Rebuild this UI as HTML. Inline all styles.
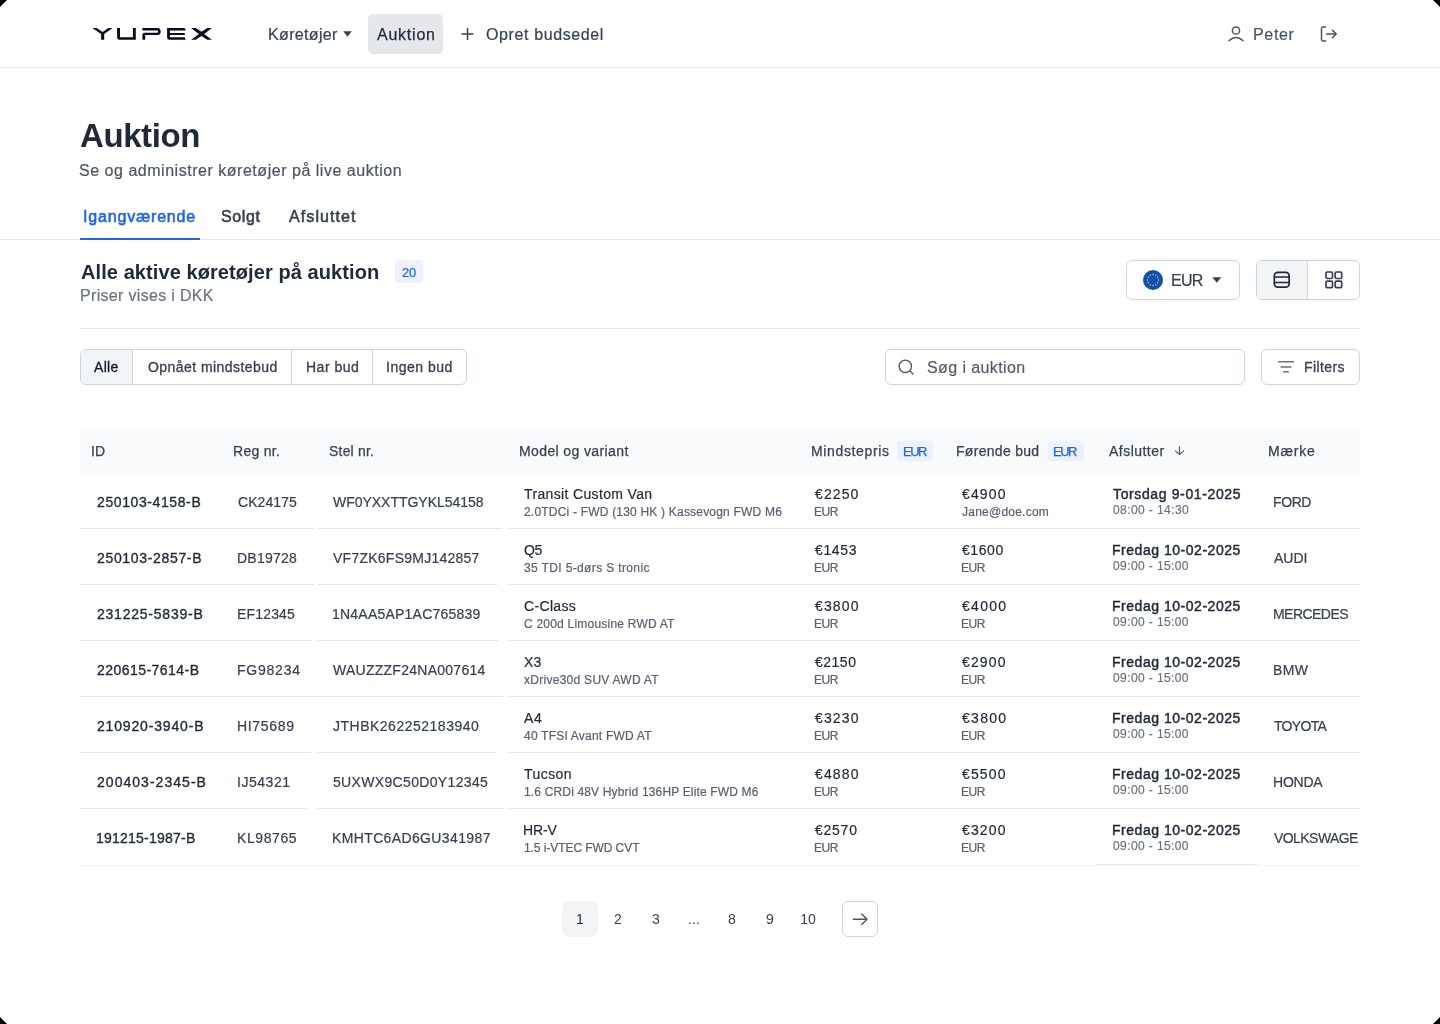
<!DOCTYPE html>
<html><head><meta charset="utf-8"><style>
html,body{margin:0;padding:0;}
body{width:1440px;height:1024px;position:relative;overflow:hidden;background:#fff;font-family:"Liberation Sans",sans-serif;}
.t{position:absolute;white-space:nowrap;line-height:1;will-change:transform;}
svg{position:absolute;overflow:visible;}
</style></head><body>
<div style="position:absolute;left:0px;top:67px;width:1440px;height:1px;background:#E5E7EB"></div>
<svg style="left:0;top:0" width="240" height="60" viewBox="0 0 240 60">
<g fill="#0A0D22">
<path d="M92.2 28 L96.8 28 L102.6 31.9 L108.3 28 L112.6 28 L104.2 33.9 L104.2 39.8 L101.1 39.8 L101.1 33.9 Z"/>
<path d="M117.1 28 L120 28 L120 37.3 L132.9 37.3 L132.9 28 L135.8 28 L135.8 39.8 L119.3 39.8 Q117.1 39.8 117.1 37.6 Z"/>
<path d="M142.4 28 L157.5 28 Q160.7 28 160.7 31.5 Q160.7 35.1 157.5 35.1 L145.2 35.1 L145.2 39.8 L142.4 39.8 L142.4 34.9 Q142.4 32.7 144.6 32.7 L157.2 32.7 Q158.1 32.7 158.1 31.5 Q158.1 30.4 157.2 30.4 L142.4 30.4 Z"/>
<path d="M167.1 28 L184.6 28 L185.8 30.4 L169.9 30.4 L169.9 32.9 L184.4 32.9 L185.2 35.1 L169.9 35.1 L169.9 37.3 L184.6 37.3 L185.8 39.8 L169.3 39.8 Q167.1 39.8 167.1 37.6 Z"/>
<path d="M191.1 28 L195.8 28 L201.5 31.8 L207.2 28 L211.8 28 L204.2 33.9 L211.8 39.8 L207.2 39.8 L201.5 35.9 L195.8 39.8 L191.1 39.8 L198.8 33.9 Z"/>
</g></svg>
<div class="t" style="left:267.75px;top:27.46px;font-size:16px;font-weight:400;color:#374151;letter-spacing:0.344px;-webkit-text-stroke:0.2px #374151">Køretøjer</div>
<svg style="left:343px;top:31px" width="9" height="6" viewBox="0 0 9 6"><path d="M0.3 0.3 L8.7 0.3 L4.5 5.7 Z" fill="#374151"/></svg>
<div style="position:absolute;left:368px;top:14px;width:75px;height:40px;background:#E5E7EB;border-radius:5px"></div>
<div class="t" style="left:376.70px;top:27.46px;font-size:16px;font-weight:400;color:#1F2937;letter-spacing:0.767px;-webkit-text-stroke:0.25px #1F2937">Auktion</div>
<svg style="left:461px;top:28px" width="13" height="12" viewBox="0 0 13 12"><path d="M6.5 0 V12 M0.5 6 H12.5" stroke="#374151" stroke-width="1.5" fill="none"/></svg>
<div class="t" style="left:485.80px;top:27.46px;font-size:16px;font-weight:400;color:#374151;letter-spacing:0.615px;-webkit-text-stroke:0.2px #374151">Opret budsedel</div>
<svg style="left:1228px;top:26px" width="16" height="16" viewBox="0 0 16 16"><circle cx="8" cy="4.5" r="3.6" stroke="#475569" stroke-width="1.5" fill="none"/><path d="M1 14.6 Q8 8.5 15 14.6" stroke="#475569" stroke-width="1.5" fill="none" stroke-linecap="round"/></svg>
<div class="t" style="left:1252.90px;top:27.46px;font-size:16px;font-weight:400;color:#475569;letter-spacing:0.675px;-webkit-text-stroke:0.2px #475569">Peter</div>
<svg style="left:1320px;top:26px" width="18" height="16" viewBox="0 0 18 16"><path d="M5.5 1 H3.2 Q1.5 1 1.5 2.7 V13.3 Q1.5 15 3.2 15 H5.5" stroke="#475569" stroke-width="1.5" fill="none" stroke-linecap="round"/><path d="M6.5 8 H16 M12.5 4.3 L16.2 8 L12.5 11.7" stroke="#475569" stroke-width="1.5" fill="none" stroke-linecap="round" stroke-linejoin="round"/></svg>
<div class="t" style="left:79.90px;top:119.07px;font-size:33px;font-weight:700;color:#1F2937;letter-spacing:-0.417px;-webkit-text-stroke:0px">Auktion</div>
<div class="t" style="left:79.25px;top:162.76px;font-size:16px;font-weight:400;color:#4B5563;letter-spacing:0.524px;-webkit-text-stroke:0.2px #4B5563">Se og administrer køretøjer på live auktion</div>
<div style="position:absolute;left:0px;top:239px;width:1440px;height:1px;background:#E5E7EB"></div>
<div style="position:absolute;left:80px;top:238px;width:120px;height:2px;background:#1C64F2"></div>
<div class="t" style="left:83.30px;top:209.46px;font-size:16px;font-weight:400;color:#1C64F2;letter-spacing:0.818px;-webkit-text-stroke:0.55px #1C64F2">Igangværende</div>
<div class="t" style="left:221.40px;top:209.46px;font-size:16px;font-weight:400;color:#374151;letter-spacing:0.65px;-webkit-text-stroke:0.55px #374151">Solgt</div>
<div class="t" style="left:288.50px;top:209.46px;font-size:16px;font-weight:400;color:#374151;letter-spacing:1.088px;-webkit-text-stroke:0.55px #374151">Afsluttet</div>
<div class="t" style="left:80.50px;top:262.37px;font-size:20px;font-weight:700;color:#1F2937;letter-spacing:0.081px;-webkit-text-stroke:0px">Alle aktive køretøjer på auktion</div>
<div style="position:absolute;left:395px;top:260px;width:28px;height:23px;background:#EDF2FE;border-radius:4px"></div>
<div class="t" style="left:401.80px;top:265.80px;font-size:13px;font-weight:400;color:#1C64F2;letter-spacing:-0.2px;-webkit-text-stroke:0.2px #1C64F2">20</div>
<div class="t" style="left:79.50px;top:288.26px;font-size:16px;font-weight:400;color:#6B7280;letter-spacing:0.324px;-webkit-text-stroke:0.2px #6B7280">Priser vises i DKK</div>
<div style="position:absolute;left:1126px;top:260px;width:112px;height:38px;border:1px solid #D1D5DB;border-radius:6px;background:#fff"></div>
<svg style="left:1143px;top:270px" width="20" height="20" viewBox="0 0 20 20"><circle cx="10" cy="10" r="10" fill="#0F4FB4"/>
<g fill="#F6D32D"><circle cx="15.50" cy="10.00" r="0.7"/><circle cx="14.76" cy="12.75" r="0.7"/><circle cx="12.75" cy="14.76" r="0.7"/><circle cx="10.00" cy="15.50" r="0.7"/><circle cx="7.25" cy="14.76" r="0.7"/><circle cx="5.24" cy="12.75" r="0.7"/><circle cx="4.50" cy="10.00" r="0.7"/><circle cx="5.24" cy="7.25" r="0.7"/><circle cx="7.25" cy="5.24" r="0.7"/><circle cx="10.00" cy="4.50" r="0.7"/><circle cx="12.75" cy="5.24" r="0.7"/><circle cx="14.76" cy="7.25" r="0.7"/></g></svg>
<div class="t" style="left:1170.60px;top:272.96px;font-size:16px;font-weight:400;color:#374151;letter-spacing:-0.7px;-webkit-text-stroke:0.2px #374151">EUR</div>
<svg style="left:1212px;top:277px" width="10" height="6" viewBox="0 0 10 6"><path d="M0.3 0.2 L9.3 0.2 L4.8 5.8 Z" fill="#374151"/></svg>
<div style="position:absolute;left:1256px;top:260px;width:102px;height:38px;border:1px solid #CBD5E1;border-radius:6px;background:#fff;overflow:hidden"></div>
<div style="position:absolute;left:1257px;top:261px;width:50px;height:38px;background:#F3F4F6;border-radius:5px 0 0 5px"></div>
<div style="position:absolute;left:1307px;top:261px;width:1px;height:38px;background:#CBD5E1"></div>
<svg style="left:1273.25px;top:271.2px" width="18" height="18" viewBox="0 0 18 18"><rect x="1.35" y="1.35" width="14.8" height="14.8" rx="3.4" stroke="#1F2937" stroke-width="1.7" fill="none"/><path d="M1.35 6.1 H16.15 M1.35 11.4 H16.15" stroke="#1F2937" stroke-width="1.5"/></svg>
<svg style="left:1325px;top:271px" width="18" height="18" viewBox="0 0 18 18"><g stroke="#374151" stroke-width="1.7" fill="none"><rect x="1" y="1" width="6.5" height="6.5" rx="1.3"/><rect x="10.2" y="1" width="6.5" height="6.5" rx="1.3"/><rect x="1" y="10.2" width="6.5" height="6.5" rx="1.3"/><rect x="10.2" y="10.2" width="6.5" height="6.5" rx="1.3"/></g></svg>
<div style="position:absolute;left:80px;top:328px;width:1280px;height:1px;background:#E5E7EB"></div>
<div style="position:absolute;left:80px;top:349px;width:385px;height:34px;border:1px solid #CBD5E1;border-radius:6px;background:#fff"></div>
<div style="position:absolute;left:81px;top:350px;width:51px;height:34px;background:#F3F4F6;border-radius:5px 0 0 5px"></div>
<div style="position:absolute;left:132px;top:350px;width:1px;height:34px;background:#CBD5E1"></div>
<div style="position:absolute;left:291px;top:350px;width:1px;height:34px;background:#CBD5E1"></div>
<div style="position:absolute;left:372px;top:350px;width:1px;height:34px;background:#CBD5E1"></div>
<div class="t" style="left:94.30px;top:360.15px;font-size:14px;font-weight:400;color:#111827;letter-spacing:0.333px;-webkit-text-stroke:0.3px #111827">Alle</div>
<div class="t" style="left:147.70px;top:360.15px;font-size:14px;font-weight:400;color:#374151;letter-spacing:0.438px;-webkit-text-stroke:0.3px #374151">Opnået mindstebud</div>
<div class="t" style="left:305.50px;top:360.15px;font-size:14px;font-weight:400;color:#374151;letter-spacing:0.5px;-webkit-text-stroke:0.3px #374151">Har bud</div>
<div class="t" style="left:386.10px;top:360.15px;font-size:14px;font-weight:400;color:#374151;letter-spacing:0.5px;-webkit-text-stroke:0.3px #374151">Ingen bud</div>
<div style="position:absolute;left:885px;top:349px;width:358px;height:34px;border:1px solid #CBD5E1;border-radius:6px;background:#fff"></div>
<svg style="left:898px;top:359px" width="16" height="16" viewBox="0 0 16 16"><circle cx="7.3" cy="7.3" r="6.2" stroke="#4B5563" stroke-width="1.3" fill="none"/><path d="M11.8 11.8 L15 15" stroke="#4B5563" stroke-width="1.3" stroke-linecap="round"/></svg>
<div class="t" style="left:926.70px;top:359.96px;font-size:16px;font-weight:400;color:#505A69;letter-spacing:0.4px;-webkit-text-stroke:0.15px #505A69">Søg i auktion</div>
<div style="position:absolute;left:1261px;top:349px;width:97px;height:34px;border:1px solid #D1D5DB;border-radius:6px;background:#fff"></div>
<svg style="left:1277px;top:360px" width="18" height="14" viewBox="0 0 18 14"><path d="M1 1.8 H17 M3.6 6.9 H14.5 M6.2 11.8 H11.9" stroke="#6B7280" stroke-width="1.5"/></svg>
<div class="t" style="left:1303.80px;top:360.15px;font-size:14px;font-weight:400;color:#374151;letter-spacing:0.417px;-webkit-text-stroke:0.3px #374151">Filters</div>
<div style="position:absolute;left:80px;top:429px;width:1280px;height:44px;background:#F9FAFB"></div>
<div class="t" style="left:91.25px;top:444.45px;font-size:14px;font-weight:400;color:#374151;letter-spacing:0.0px;-webkit-text-stroke:0.25px #374151">ID</div>
<div class="t" style="left:233.30px;top:444.45px;font-size:14px;font-weight:400;color:#374151;letter-spacing:0.3px;-webkit-text-stroke:0.25px #374151">Reg nr.</div>
<div class="t" style="left:329.10px;top:444.45px;font-size:14px;font-weight:400;color:#374151;letter-spacing:0.2px;-webkit-text-stroke:0.25px #374151">Stel nr.</div>
<div class="t" style="left:519.40px;top:444.45px;font-size:14px;font-weight:400;color:#374151;letter-spacing:0.387px;-webkit-text-stroke:0.25px #374151">Model og variant</div>
<div class="t" style="left:810.50px;top:444.45px;font-size:14px;font-weight:400;color:#374151;letter-spacing:0.64px;-webkit-text-stroke:0.25px #374151">Mindstepris</div>
<div style="position:absolute;left:897px;top:441px;width:36px;height:20px;background:#EBF1FD;border-radius:4px"></div>
<div class="t" style="left:902.50px;top:445.00px;font-size:13px;font-weight:400;color:#1C64F2;letter-spacing:-1.5px;-webkit-text-stroke:0.25px #1C64F2">EUR</div>
<div class="t" style="left:956.30px;top:444.45px;font-size:14px;font-weight:400;color:#374151;letter-spacing:0.3px;-webkit-text-stroke:0.25px #374151">Førende bud</div>
<div style="position:absolute;left:1048px;top:441px;width:36px;height:20px;background:#EBF1FD;border-radius:4px"></div>
<div class="t" style="left:1053.30px;top:445.00px;font-size:13px;font-weight:400;color:#1C64F2;letter-spacing:-1.5px;-webkit-text-stroke:0.25px #1C64F2">EUR</div>
<div class="t" style="left:1108.50px;top:444.45px;font-size:14px;font-weight:400;color:#374151;letter-spacing:0.475px;-webkit-text-stroke:0.25px #374151">Afslutter</div>
<svg style="left:1174px;top:445px" width="12" height="12" viewBox="0 0 12 12"><path d="M5.5 1.9 V9.6 M1.5 5.9 L5.5 9.7 L9.6 5.9" stroke="#4B5563" stroke-width="1.1" fill="none" stroke-linecap="round" stroke-linejoin="round"/></svg>
<div class="t" style="left:1268.40px;top:444.45px;font-size:14px;font-weight:400;color:#374151;letter-spacing:0.825px;-webkit-text-stroke:0.25px #374151">Mærke</div>
<div class="t" style="left:96.80px;top:494.85px;font-size:14px;font-weight:400;color:#1F2937;letter-spacing:0.6px;-webkit-text-stroke:0.35px #1F2937">250103-4158-B</div>
<div class="t" style="left:238.10px;top:494.85px;font-size:14px;font-weight:400;color:#374151;letter-spacing:0.083px;-webkit-text-stroke:0.2px #374151">CK24175</div>
<div class="t" style="left:333.40px;top:494.85px;font-size:14px;font-weight:400;color:#374151;letter-spacing:-0.025px;-webkit-text-stroke:0.2px #374151">WF0YXXTTGYKL54158</div>
<div class="t" style="left:524.30px;top:487.05px;font-size:14px;font-weight:400;color:#1F2937;letter-spacing:0.353px;-webkit-text-stroke:0.2px #1F2937">Transit Custom Van</div>
<div class="t" style="left:524.30px;top:505.74px;font-size:12px;font-weight:400;color:#576172;letter-spacing:0.2px;-webkit-text-stroke:0.2px #576172">2.0TDCi - FWD (130 HK ) Kassevogn FWD M6</div>
<div class="t" style="left:814.70px;top:487.05px;font-size:14px;font-weight:400;color:#1F2937;letter-spacing:1.1px;-webkit-text-stroke:0.2px #1F2937">€2250</div>
<div class="t" style="left:814.40px;top:505.74px;font-size:12px;font-weight:400;color:#576172;letter-spacing:-0.4px;-webkit-text-stroke:0.2px #576172">EUR</div>
<div class="t" style="left:961.50px;top:487.05px;font-size:14px;font-weight:400;color:#1F2937;letter-spacing:1.15px;-webkit-text-stroke:0.2px #1F2937">€4900</div>
<div class="t" style="left:961.50px;top:505.74px;font-size:12px;font-weight:400;color:#576172;letter-spacing:0.236px;-webkit-text-stroke:0.2px #576172">Jane@doe.com</div>
<div class="t" style="left:1112.60px;top:487.05px;font-size:14px;font-weight:400;color:#1F2937;letter-spacing:0.625px;-webkit-text-stroke:0.45px #1F2937">Torsdag 9-01-2025</div>
<div class="t" style="left:1112.60px;top:503.64px;font-size:12px;font-weight:400;color:#6B7280;letter-spacing:0.417px;-webkit-text-stroke:0.2px #6B7280">08:00 - 14:30</div>
<div class="t" style="left:1272.50px;top:494.85px;font-size:14px;font-weight:400;color:#374151;letter-spacing:-0.4px;-webkit-text-stroke:0.2px #374151">FORD</div>
<div style="position:absolute;left:80px;top:528px;width:234px;height:1px;background:#E2E8F0"></div>
<div style="position:absolute;left:317px;top:528px;width:185px;height:1px;background:#E2E8F0"></div>
<div style="position:absolute;left:508px;top:528px;width:852px;height:1px;background:#E2E8F0"></div>
<div class="t" style="left:96.80px;top:550.85px;font-size:14px;font-weight:400;color:#1F2937;letter-spacing:0.667px;-webkit-text-stroke:0.35px #1F2937">250103-2857-B</div>
<div class="t" style="left:237.10px;top:550.85px;font-size:14px;font-weight:400;color:#374151;letter-spacing:0.25px;-webkit-text-stroke:0.2px #374151">DB19728</div>
<div class="t" style="left:333.40px;top:550.85px;font-size:14px;font-weight:400;color:#374151;letter-spacing:0.25px;-webkit-text-stroke:0.2px #374151">VF7ZK6FS9MJ142857</div>
<div class="t" style="left:524.30px;top:543.05px;font-size:14px;font-weight:400;color:#1F2937;letter-spacing:-0.4px;-webkit-text-stroke:0.2px #1F2937">Q5</div>
<div class="t" style="left:524.30px;top:561.74px;font-size:12px;font-weight:400;color:#576172;letter-spacing:0.362px;-webkit-text-stroke:0.2px #576172">35 TDI 5-dørs S tronic</div>
<div class="t" style="left:814.70px;top:543.05px;font-size:14px;font-weight:400;color:#1F2937;letter-spacing:0.625px;-webkit-text-stroke:0.2px #1F2937">€1453</div>
<div class="t" style="left:814.40px;top:561.74px;font-size:12px;font-weight:400;color:#576172;letter-spacing:-0.4px;-webkit-text-stroke:0.2px #576172">EUR</div>
<div class="t" style="left:961.50px;top:543.05px;font-size:14px;font-weight:400;color:#1F2937;letter-spacing:0.575px;-webkit-text-stroke:0.2px #1F2937">€1600</div>
<div class="t" style="left:960.50px;top:561.74px;font-size:12px;font-weight:400;color:#576172;letter-spacing:-0.4px;-webkit-text-stroke:0.2px #576172">EUR</div>
<div class="t" style="left:1111.60px;top:543.05px;font-size:14px;font-weight:400;color:#1F2937;letter-spacing:0.531px;-webkit-text-stroke:0.45px #1F2937">Fredag 10-02-2025</div>
<div class="t" style="left:1112.60px;top:559.64px;font-size:12px;font-weight:400;color:#6B7280;letter-spacing:0.4px;-webkit-text-stroke:0.2px #6B7280">09:00 - 15:00</div>
<div class="t" style="left:1273.50px;top:550.85px;font-size:14px;font-weight:400;color:#374151;letter-spacing:-0.033px;-webkit-text-stroke:0.2px #374151">AUDI</div>
<div style="position:absolute;left:80px;top:584px;width:234px;height:1px;background:#E2E8F0"></div>
<div style="position:absolute;left:317px;top:584px;width:180px;height:1px;background:#E2E8F0"></div>
<div style="position:absolute;left:508px;top:584px;width:852px;height:1px;background:#E2E8F0"></div>
<div class="t" style="left:96.80px;top:606.85px;font-size:14px;font-weight:400;color:#1F2937;letter-spacing:0.775px;-webkit-text-stroke:0.35px #1F2937">231225-5839-B</div>
<div class="t" style="left:237.10px;top:606.85px;font-size:14px;font-weight:400;color:#374151;letter-spacing:0.167px;-webkit-text-stroke:0.2px #374151">EF12345</div>
<div class="t" style="left:332.40px;top:606.85px;font-size:14px;font-weight:400;color:#374151;letter-spacing:0.219px;-webkit-text-stroke:0.2px #374151">1N4AA5AP1AC765839</div>
<div class="t" style="left:524.30px;top:599.05px;font-size:14px;font-weight:400;color:#1F2937;letter-spacing:0.333px;-webkit-text-stroke:0.2px #1F2937">C-Class</div>
<div class="t" style="left:524.30px;top:617.74px;font-size:12px;font-weight:400;color:#576172;letter-spacing:0.218px;-webkit-text-stroke:0.2px #576172">C 200d Limousine RWD AT</div>
<div class="t" style="left:814.70px;top:599.05px;font-size:14px;font-weight:400;color:#1F2937;letter-spacing:1.125px;-webkit-text-stroke:0.2px #1F2937">€3800</div>
<div class="t" style="left:814.40px;top:617.74px;font-size:12px;font-weight:400;color:#576172;letter-spacing:-0.4px;-webkit-text-stroke:0.2px #576172">EUR</div>
<div class="t" style="left:961.50px;top:599.05px;font-size:14px;font-weight:400;color:#1F2937;letter-spacing:1.3px;-webkit-text-stroke:0.2px #1F2937">€4000</div>
<div class="t" style="left:960.50px;top:617.74px;font-size:12px;font-weight:400;color:#576172;letter-spacing:-0.4px;-webkit-text-stroke:0.2px #576172">EUR</div>
<div class="t" style="left:1111.60px;top:599.05px;font-size:14px;font-weight:400;color:#1F2937;letter-spacing:0.531px;-webkit-text-stroke:0.45px #1F2937">Fredag 10-02-2025</div>
<div class="t" style="left:1112.60px;top:615.64px;font-size:12px;font-weight:400;color:#6B7280;letter-spacing:0.4px;-webkit-text-stroke:0.2px #6B7280">09:00 - 15:00</div>
<div class="t" style="left:1272.50px;top:606.85px;font-size:14px;font-weight:400;color:#374151;letter-spacing:-0.543px;-webkit-text-stroke:0.2px #374151">MERCEDES</div>
<div style="position:absolute;left:80px;top:640px;width:232px;height:1px;background:#E2E8F0"></div>
<div style="position:absolute;left:317px;top:640px;width:181px;height:1px;background:#E2E8F0"></div>
<div style="position:absolute;left:508px;top:640px;width:852px;height:1px;background:#E2E8F0"></div>
<div class="t" style="left:96.80px;top:662.85px;font-size:14px;font-weight:400;color:#1F2937;letter-spacing:0.458px;-webkit-text-stroke:0.35px #1F2937">220615-7614-B</div>
<div class="t" style="left:237.10px;top:662.85px;font-size:14px;font-weight:400;color:#374151;letter-spacing:0.767px;-webkit-text-stroke:0.2px #374151">FG98234</div>
<div class="t" style="left:333.40px;top:662.85px;font-size:14px;font-weight:400;color:#374151;letter-spacing:0.262px;-webkit-text-stroke:0.2px #374151">WAUZZZF24NA007614</div>
<div class="t" style="left:524.30px;top:655.05px;font-size:14px;font-weight:400;color:#1F2937;letter-spacing:0.2px;-webkit-text-stroke:0.2px #1F2937">X3</div>
<div class="t" style="left:524.30px;top:673.74px;font-size:12px;font-weight:400;color:#576172;letter-spacing:0.274px;-webkit-text-stroke:0.2px #576172">xDrive30d SUV AWD AT</div>
<div class="t" style="left:814.70px;top:655.05px;font-size:14px;font-weight:400;color:#1F2937;letter-spacing:0.5px;-webkit-text-stroke:0.2px #1F2937">€2150</div>
<div class="t" style="left:814.40px;top:673.74px;font-size:12px;font-weight:400;color:#576172;letter-spacing:-0.4px;-webkit-text-stroke:0.2px #576172">EUR</div>
<div class="t" style="left:961.50px;top:655.05px;font-size:14px;font-weight:400;color:#1F2937;letter-spacing:1.125px;-webkit-text-stroke:0.2px #1F2937">€2900</div>
<div class="t" style="left:960.50px;top:673.74px;font-size:12px;font-weight:400;color:#576172;letter-spacing:-0.4px;-webkit-text-stroke:0.2px #576172">EUR</div>
<div class="t" style="left:1111.60px;top:655.05px;font-size:14px;font-weight:400;color:#1F2937;letter-spacing:0.531px;-webkit-text-stroke:0.45px #1F2937">Fredag 10-02-2025</div>
<div class="t" style="left:1112.60px;top:671.64px;font-size:12px;font-weight:400;color:#6B7280;letter-spacing:0.4px;-webkit-text-stroke:0.2px #6B7280">09:00 - 15:00</div>
<div class="t" style="left:1272.50px;top:662.85px;font-size:14px;font-weight:400;color:#374151;letter-spacing:0.4px;-webkit-text-stroke:0.2px #374151">BMW</div>
<div style="position:absolute;left:80px;top:696px;width:237px;height:1px;background:#E2E8F0"></div>
<div style="position:absolute;left:317px;top:696px;width:186px;height:1px;background:#E2E8F0"></div>
<div style="position:absolute;left:508px;top:696px;width:852px;height:1px;background:#E2E8F0"></div>
<div class="t" style="left:96.80px;top:718.85px;font-size:14px;font-weight:400;color:#1F2937;letter-spacing:0.833px;-webkit-text-stroke:0.35px #1F2937">210920-3940-B</div>
<div class="t" style="left:237.10px;top:718.85px;font-size:14px;font-weight:400;color:#374151;letter-spacing:0.667px;-webkit-text-stroke:0.2px #374151">HI75689</div>
<div class="t" style="left:333.40px;top:718.85px;font-size:14px;font-weight:400;color:#374151;letter-spacing:0.5px;-webkit-text-stroke:0.2px #374151">JTHBK262252183940</div>
<div class="t" style="left:524.30px;top:711.05px;font-size:14px;font-weight:400;color:#1F2937;letter-spacing:0.7px;-webkit-text-stroke:0.2px #1F2937">A4</div>
<div class="t" style="left:524.30px;top:729.74px;font-size:12px;font-weight:400;color:#576172;letter-spacing:0.216px;-webkit-text-stroke:0.2px #576172">40 TFSI Avant FWD AT</div>
<div class="t" style="left:814.70px;top:711.05px;font-size:14px;font-weight:400;color:#1F2937;letter-spacing:1.125px;-webkit-text-stroke:0.2px #1F2937">€3230</div>
<div class="t" style="left:814.40px;top:729.74px;font-size:12px;font-weight:400;color:#576172;letter-spacing:-0.4px;-webkit-text-stroke:0.2px #576172">EUR</div>
<div class="t" style="left:961.50px;top:711.05px;font-size:14px;font-weight:400;color:#1F2937;letter-spacing:1.3px;-webkit-text-stroke:0.2px #1F2937">€3800</div>
<div class="t" style="left:960.50px;top:729.74px;font-size:12px;font-weight:400;color:#576172;letter-spacing:-0.4px;-webkit-text-stroke:0.2px #576172">EUR</div>
<div class="t" style="left:1111.60px;top:711.05px;font-size:14px;font-weight:400;color:#1F2937;letter-spacing:0.531px;-webkit-text-stroke:0.45px #1F2937">Fredag 10-02-2025</div>
<div class="t" style="left:1112.60px;top:727.64px;font-size:12px;font-weight:400;color:#6B7280;letter-spacing:0.4px;-webkit-text-stroke:0.2px #6B7280">09:00 - 15:00</div>
<div class="t" style="left:1273.50px;top:718.85px;font-size:14px;font-weight:400;color:#374151;letter-spacing:-0.68px;-webkit-text-stroke:0.2px #374151">TOYOTA</div>
<div style="position:absolute;left:80px;top:752px;width:231px;height:1px;background:#E2E8F0"></div>
<div style="position:absolute;left:317px;top:752px;width:179px;height:1px;background:#E2E8F0"></div>
<div style="position:absolute;left:508px;top:752px;width:852px;height:1px;background:#E2E8F0"></div>
<div class="t" style="left:96.80px;top:774.85px;font-size:14px;font-weight:400;color:#1F2937;letter-spacing:1.033px;-webkit-text-stroke:0.35px #1F2937">200403-2345-B</div>
<div class="t" style="left:237.10px;top:774.85px;font-size:14px;font-weight:400;color:#374151;letter-spacing:0.533px;-webkit-text-stroke:0.2px #374151">IJ54321</div>
<div class="t" style="left:333.40px;top:774.85px;font-size:14px;font-weight:400;color:#374151;letter-spacing:0.338px;-webkit-text-stroke:0.2px #374151">5UXWX9C50D0Y12345</div>
<div class="t" style="left:524.30px;top:767.05px;font-size:14px;font-weight:400;color:#1F2937;letter-spacing:0.44px;-webkit-text-stroke:0.2px #1F2937">Tucson</div>
<div class="t" style="left:524.30px;top:785.74px;font-size:12px;font-weight:400;color:#576172;letter-spacing:0.159px;-webkit-text-stroke:0.2px #576172">1.6 CRDi 48V Hybrid 136HP Elite FWD M6</div>
<div class="t" style="left:814.70px;top:767.05px;font-size:14px;font-weight:400;color:#1F2937;letter-spacing:1.125px;-webkit-text-stroke:0.2px #1F2937">€4880</div>
<div class="t" style="left:814.40px;top:785.74px;font-size:12px;font-weight:400;color:#576172;letter-spacing:-0.4px;-webkit-text-stroke:0.2px #576172">EUR</div>
<div class="t" style="left:961.50px;top:767.05px;font-size:14px;font-weight:400;color:#1F2937;letter-spacing:1.125px;-webkit-text-stroke:0.2px #1F2937">€5500</div>
<div class="t" style="left:960.50px;top:785.74px;font-size:12px;font-weight:400;color:#576172;letter-spacing:-0.4px;-webkit-text-stroke:0.2px #576172">EUR</div>
<div class="t" style="left:1111.60px;top:767.05px;font-size:14px;font-weight:400;color:#1F2937;letter-spacing:0.531px;-webkit-text-stroke:0.45px #1F2937">Fredag 10-02-2025</div>
<div class="t" style="left:1112.60px;top:783.64px;font-size:12px;font-weight:400;color:#6B7280;letter-spacing:0.4px;-webkit-text-stroke:0.2px #6B7280">09:00 - 15:00</div>
<div class="t" style="left:1272.50px;top:774.85px;font-size:14px;font-weight:400;color:#374151;letter-spacing:-0.225px;-webkit-text-stroke:0.2px #374151">HONDA</div>
<div style="position:absolute;left:80px;top:808px;width:227px;height:1px;background:#E2E8F0"></div>
<div style="position:absolute;left:317px;top:808px;width:188px;height:1px;background:#E2E8F0"></div>
<div style="position:absolute;left:508px;top:808px;width:852px;height:1px;background:#E2E8F0"></div>
<div class="t" style="left:95.80px;top:830.85px;font-size:14px;font-weight:400;color:#1F2937;letter-spacing:0.233px;-webkit-text-stroke:0.35px #1F2937">191215-1987-B</div>
<div class="t" style="left:237.10px;top:830.85px;font-size:14px;font-weight:400;color:#374151;letter-spacing:0.583px;-webkit-text-stroke:0.2px #374151">KL98765</div>
<div class="t" style="left:332.40px;top:830.85px;font-size:14px;font-weight:400;color:#374151;letter-spacing:0.369px;-webkit-text-stroke:0.2px #374151">KMHTC6AD6GU341987</div>
<div class="t" style="left:523.30px;top:823.05px;font-size:14px;font-weight:400;color:#1F2937;letter-spacing:-0.167px;-webkit-text-stroke:0.2px #1F2937">HR-V</div>
<div class="t" style="left:524.30px;top:841.74px;font-size:12px;font-weight:400;color:#576172;letter-spacing:-0.071px;-webkit-text-stroke:0.2px #576172">1.5 i-VTEC FWD CVT</div>
<div class="t" style="left:814.70px;top:823.05px;font-size:14px;font-weight:400;color:#1F2937;letter-spacing:0.75px;-webkit-text-stroke:0.2px #1F2937">€2570</div>
<div class="t" style="left:814.40px;top:841.74px;font-size:12px;font-weight:400;color:#576172;letter-spacing:-0.4px;-webkit-text-stroke:0.2px #576172">EUR</div>
<div class="t" style="left:961.50px;top:823.05px;font-size:14px;font-weight:400;color:#1F2937;letter-spacing:1.125px;-webkit-text-stroke:0.2px #1F2937">€3200</div>
<div class="t" style="left:960.50px;top:841.74px;font-size:12px;font-weight:400;color:#576172;letter-spacing:-0.4px;-webkit-text-stroke:0.2px #576172">EUR</div>
<div class="t" style="left:1111.60px;top:823.05px;font-size:14px;font-weight:400;color:#1F2937;letter-spacing:0.531px;-webkit-text-stroke:0.45px #1F2937">Fredag 10-02-2025</div>
<div class="t" style="left:1112.60px;top:839.64px;font-size:12px;font-weight:400;color:#6B7280;letter-spacing:0.4px;-webkit-text-stroke:0.2px #6B7280">09:00 - 15:00</div>
<div class="t" style="left:1273.50px;top:830.85px;font-size:14px;font-weight:400;color:#374151;letter-spacing:-0.562px;-webkit-text-stroke:0.2px #374151">VOLKSWAGE</div>
<div style="position:absolute;left:80px;top:865px;width:1280px;height:1px;background:#F3F4F6"></div>
<div style="position:absolute;left:1096px;top:864px;width:161px;height:1px;background:#E2E8F0"></div>
<div style="position:absolute;left:562px;top:901px;width:36px;height:36px;background:#F3F4F6;border-radius:7px"></div>
<div class="t" style="left:559.5px;width:40px;text-align:center;top:912.35px;font-size:14px;color:#1F2937">1</div>
<div class="t" style="left:597.6px;width:40px;text-align:center;top:912.35px;font-size:14px;color:#374151">2</div>
<div class="t" style="left:635.5px;width:40px;text-align:center;top:912.35px;font-size:14px;color:#374151">3</div>
<div class="t" style="left:711.7px;width:40px;text-align:center;top:912.35px;font-size:14px;color:#374151">8</div>
<div class="t" style="left:749.9px;width:40px;text-align:center;top:912.35px;font-size:14px;color:#374151">9</div>
<div class="t" style="left:787.6px;width:40px;text-align:center;top:912.35px;font-size:14px;color:#374151">10</div>
<div class="t" style="left:674px;width:40px;text-align:center;top:912.35px;font-size:14px;color:#374151;letter-spacing:0.3px">...</div>
<div style="position:absolute;left:842px;top:901px;width:34px;height:34px;border:1px solid #D1D5DB;border-radius:6px;background:#fff"></div>
<svg style="left:852px;top:912px" width="16" height="14" viewBox="0 0 16 14"><path d="M1.2 7.2 H15 M9.8 2 L15 7.2 L9.8 12.4" stroke="#4B5563" stroke-width="1.35" fill="none" stroke-linecap="round" stroke-linejoin="round"/></svg>
<div style="position:absolute;width:0;height:0;left:0;top:0;border-top:7px solid #000;border-right:7px solid transparent"></div>
<div style="position:absolute;width:0;height:0;right:0;top:0;border-top:7px solid #000;border-left:7px solid transparent"></div>
<div style="position:absolute;width:0;height:0;left:0;bottom:0;border-bottom:7px solid #000;border-right:7px solid transparent"></div>
<div style="position:absolute;width:0;height:0;right:0;bottom:0;border-bottom:7px solid #000;border-left:7px solid transparent"></div>
</body></html>
